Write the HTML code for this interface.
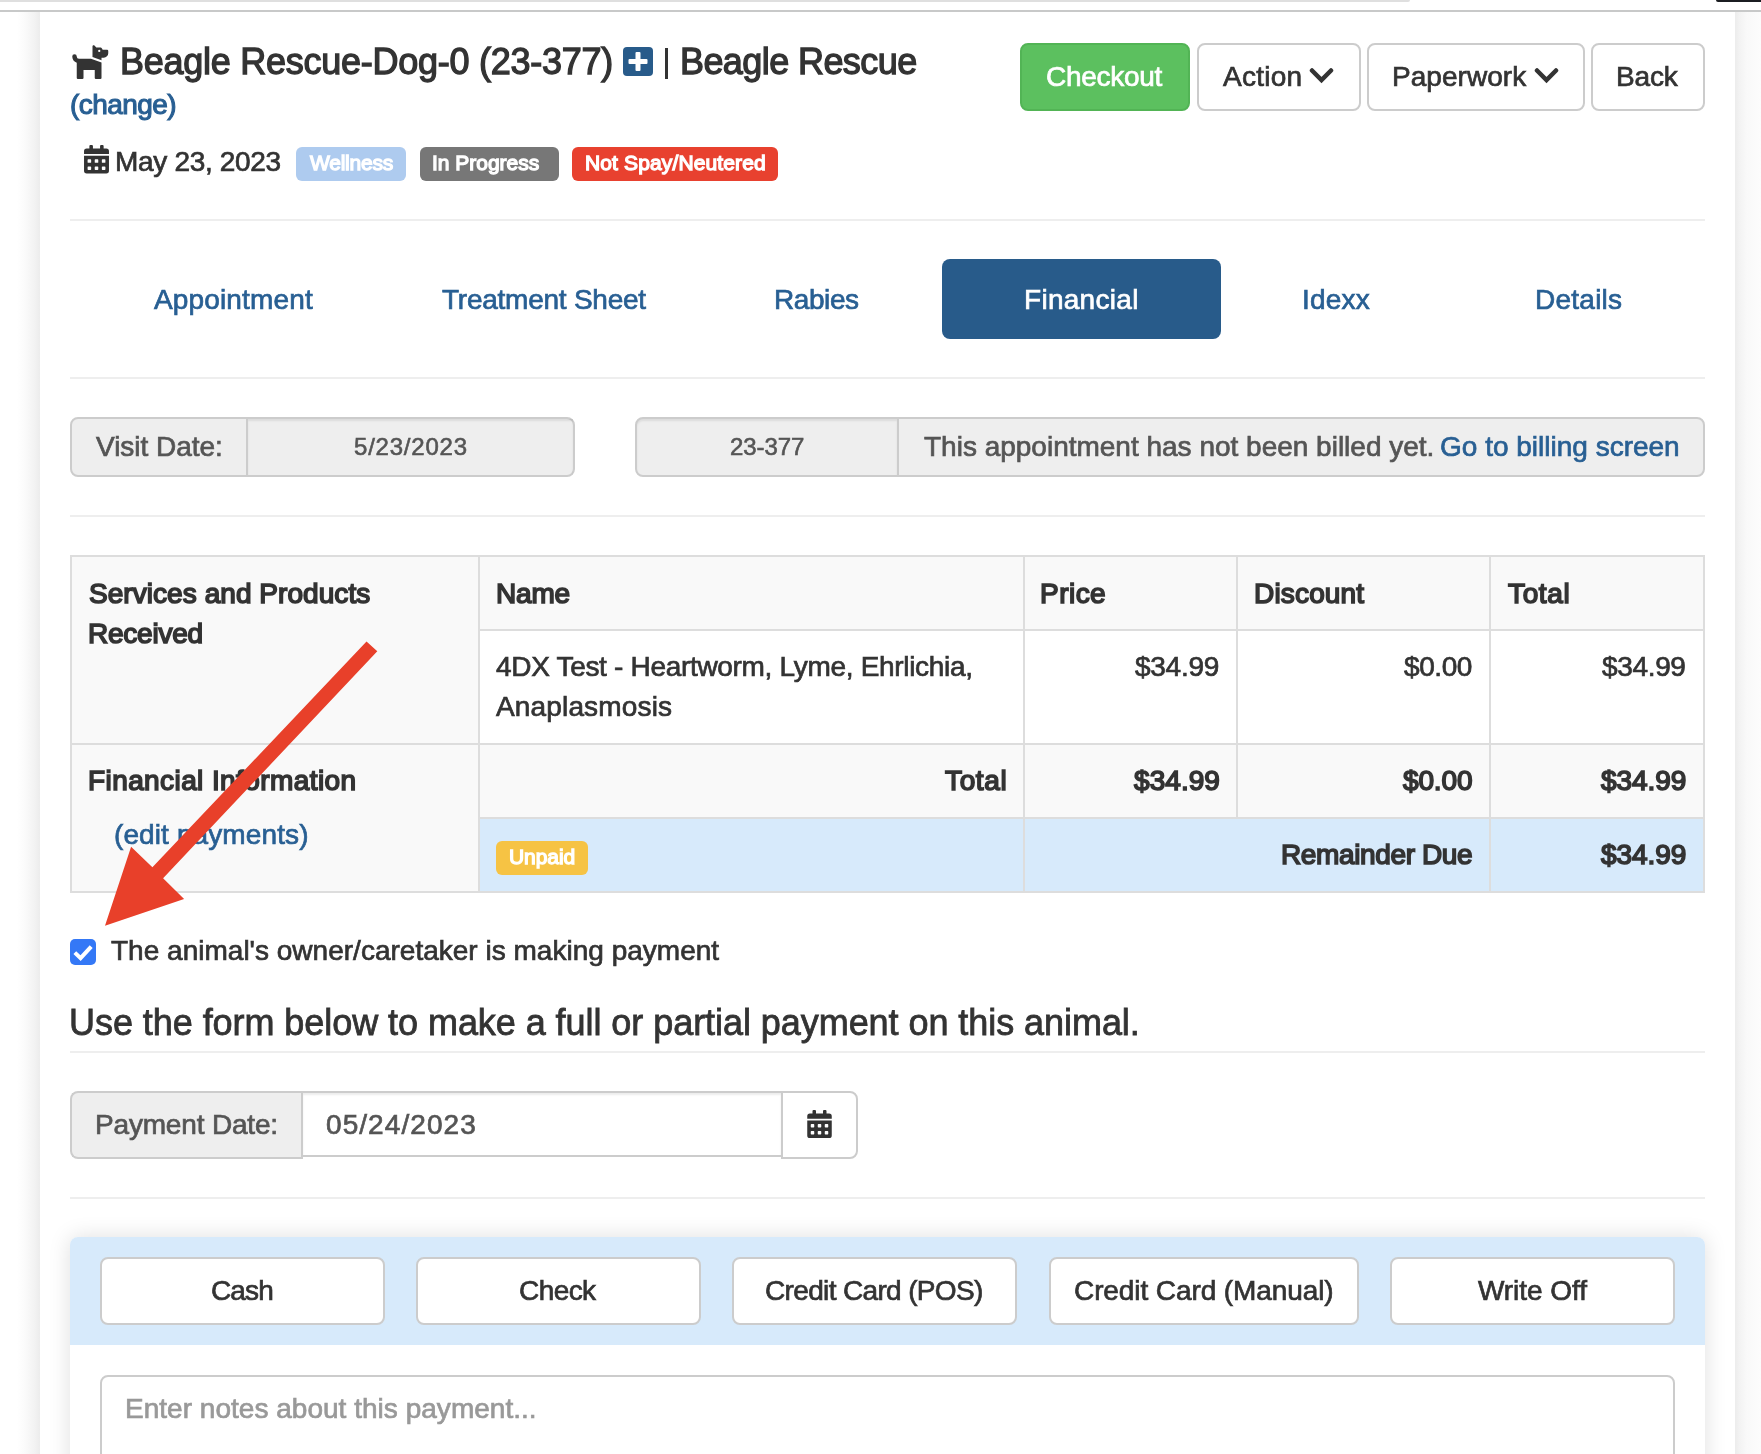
<!DOCTYPE html>
<html><head><meta charset="utf-8">
<style>
*{box-sizing:border-box;}
html,body{margin:0;padding:0;}
body{width:1761px;height:1454px;overflow:hidden;position:relative;background:#fff;font-family:"Liberation Sans",sans-serif;color:#333;}
.a{position:absolute;}
.t{position:absolute;white-space:nowrap;will-change:transform;}
.hr{position:absolute;left:70px;width:1635px;height:2px;background:#eee;}
.btn{position:absolute;height:68px;border:2px solid #ccc;border-radius:8px;background:#fff;}
.badge{position:absolute;top:147px;height:34px;border-radius:6px;}
</style></head><body>
<div class="a" style="left:0;top:0;width:1410px;height:2px;background:#dfdfdf;border-bottom-right-radius:3px;"></div>
<div class="a" style="left:1716px;top:0;width:45px;height:2px;background:#1b1d21;border-bottom-left-radius:3px;"></div>
<div class="a" style="left:0;top:10px;width:1761px;height:2px;background:#c8c9c9;"></div>
<div class="a" style="left:0;top:12px;width:40px;height:1442px;background:linear-gradient(to right,#fff 0px,#fff 17px,#fbfbfb 24px,#f3f3f3 34px,#ececec 40px);"></div>
<div class="a" style="left:1735px;top:12px;width:26px;height:1442px;background:linear-gradient(to right,#ececec 0px,#f3f3f3 5px,#f9f9f9 12px,#fcfcfc 26px);"></div>
<svg class="a" style="left:69.75px;top:42.8px;width:40.5px;height:36px" viewBox="0 0 576 512"><path fill="#333" d="M298.06,224,448,277.55V496a16,16,0,0,1-16,16H368a16,16,0,0,1-16-16V384H192V496a16,16,0,0,1-16,16H112a16,16,0,0,1-16-16V282.09C58.84,268.84,32,233.66,32,192a32,32,0,0,1,64,0,32.06,32.06,0,0,0,32,32ZM544,112v32a64,64,0,0,1-64,64H448v35.58L320,197.87V48c0-14.25,17.22-21.39,27.31-11.31L374.59,64h53.63c10.91,0,23.75,7.92,28.62,17.69L464,96h64A16,16,0,0,1,544,112Zm-112,0a16,16,0,1,0-16,16A16,16,0,0,0,432,112Z"/></svg>
<svg class="a" style="left:623px;top:47px;width:30px;height:29px" viewBox="0 0 30 29"><rect x="0" y="0" width="30" height="29" rx="4" fill="#285b8a"/><rect x="12.5" y="5" width="5" height="19" rx="1" fill="#fff"/><rect x="5.5" y="12" width="19" height="5" rx="1" fill="#fff"/></svg>
<div class="a" style="left:664.5px;top:48px;width:3.5px;height:30.5px;background:#333;"></div>
<svg class="a" style="left:84px;top:145px;width:25px;height:28.5px" viewBox="0 0 448 512"><path fill="#333" d="M0 112a48 48 0 0 1 48-48h352a48 48 0 0 1 48 48v48H0z M96 20a20 20 0 0 1 20-20h24a20 20 0 0 1 20 20v50H96z M288 20a20 20 0 0 1 20-20h24a20 20 0 0 1 20 20v50H288z"/><path fill="#333" fill-rule="evenodd" d="M0 192h448v272a48 48 0 0 1-48 48H48a48 48 0 0 1-48-48z M64 268a12 12 0 0 1 12-12h40a12 12 0 0 1 12 12v40a12 12 0 0 1-12 12h-40a12 12 0 0 1-12-12z M192 268a12 12 0 0 1 12-12h40a12 12 0 0 1 12 12v40a12 12 0 0 1-12 12h-40a12 12 0 0 1-12-12z M320 268a12 12 0 0 1 12-12h40a12 12 0 0 1 12 12v40a12 12 0 0 1-12 12h-40a12 12 0 0 1-12-12z M64 396a12 12 0 0 1 12-12h40a12 12 0 0 1 12 12v40a12 12 0 0 1-12 12h-40a12 12 0 0 1-12-12z M192 396a12 12 0 0 1 12-12h40a12 12 0 0 1 12 12v40a12 12 0 0 1-12 12h-40a12 12 0 0 1-12-12z M320 396a12 12 0 0 1 12-12h40a12 12 0 0 1 12 12v40a12 12 0 0 1-12 12h-40a12 12 0 0 1-12-12z"/></svg>
<div class="badge" style="left:296px;width:110px;background:#aecbef;"></div>
<div class="badge" style="left:420px;width:139px;background:#777;"></div>
<div class="badge" style="left:572px;width:206px;background:#e8412f;"></div>
<div class="btn" style="left:1020px;top:43px;width:170px;background:#5cc05f;border-color:#52b455;"></div>
<div class="btn" style="left:1197px;top:43px;width:164px;"></div>
<svg class="a" style="left:1309px;top:68px;width:25px;height:16px" viewBox="0 0 25 16"><path d="M3 2.5 L12.5 12 L22 2.5" fill="none" stroke="#333" stroke-width="4.5" stroke-linecap="round"/></svg>
<div class="btn" style="left:1367px;top:43px;width:218px;"></div>
<svg class="a" style="left:1533.5px;top:68px;width:25px;height:16px" viewBox="0 0 25 16"><path d="M3 2.5 L12.5 12 L22 2.5" fill="none" stroke="#333" stroke-width="4.5" stroke-linecap="round"/></svg>
<div class="btn" style="left:1591px;top:43px;width:114px;"></div>
<div class="hr" style="top:219px;"></div>
<div class="a" style="left:942px;top:259px;width:279px;height:80px;background:#285b8a;border-radius:8px;"></div>
<div class="hr" style="top:377px;"></div>
<div class="a" style="left:70px;top:417px;width:505px;height:60px;border:2px solid #ccc;border-radius:8px;background:#eee;"></div>
<div class="a" style="left:248px;top:419px;width:325px;height:56px;box-shadow:inset 0 2px 2px rgba(0,0,0,.075);"></div>
<div class="a" style="left:246px;top:419px;width:2px;height:56px;background:#ccc;"></div>
<div class="a" style="left:635px;top:417px;width:1070px;height:60px;border:2px solid #ccc;border-radius:8px;background:#eee;"></div>
<div class="a" style="left:637px;top:419px;width:260px;height:56px;border-radius:6px 0 0 6px;box-shadow:inset 0 2px 2px rgba(0,0,0,.075);"></div>
<div class="a" style="left:897px;top:419px;width:2px;height:56px;background:#ccc;"></div>
<div class="hr" style="top:515px;"></div>
<div class="a" style="left:70px;top:555px;width:1635px;height:338px;background:#ddd;"></div>
<div class="a" style="left:72px;top:557px;width:406px;height:186px;background:#f9f9f9;"></div>
<div class="a" style="left:72px;top:745px;width:406px;height:146px;background:#f9f9f9;"></div>
<div class="a" style="left:480px;top:557px;width:543px;height:72px;background:#f9f9f9;"></div>
<div class="a" style="left:1025px;top:557px;width:211px;height:72px;background:#f9f9f9;"></div>
<div class="a" style="left:1238px;top:557px;width:251px;height:72px;background:#f9f9f9;"></div>
<div class="a" style="left:1491px;top:557px;width:212px;height:72px;background:#f9f9f9;"></div>
<div class="a" style="left:480px;top:631px;width:543px;height:112px;background:#fff;"></div>
<div class="a" style="left:1025px;top:631px;width:211px;height:112px;background:#fff;"></div>
<div class="a" style="left:1238px;top:631px;width:251px;height:112px;background:#fff;"></div>
<div class="a" style="left:1491px;top:631px;width:212px;height:112px;background:#fff;"></div>
<div class="a" style="left:480px;top:745px;width:543px;height:72px;background:#f9f9f9;"></div>
<div class="a" style="left:1025px;top:745px;width:211px;height:72px;background:#f9f9f9;"></div>
<div class="a" style="left:1238px;top:745px;width:251px;height:72px;background:#f9f9f9;"></div>
<div class="a" style="left:1491px;top:745px;width:212px;height:72px;background:#f9f9f9;"></div>
<div class="a" style="left:480px;top:819px;width:543px;height:72px;background:#d7eafb;"></div>
<div class="a" style="left:1025px;top:819px;width:464px;height:72px;background:#d7eafb;"></div>
<div class="a" style="left:1491px;top:819px;width:212px;height:72px;background:#d7eafb;"></div>
<div class="badge" style="left:496px;top:841px;width:92px;background:#f6c344;"></div>
<svg class="a" style="left:70px;top:939px;width:26px;height:26px" viewBox="0 0 26 26"><rect x="0" y="0" width="26" height="26" rx="5" fill="#3478f6"/><path d="M4.8 13.6 L10.6 19.2 L21.2 7.6" fill="none" stroke="#fff" stroke-width="4" stroke-linecap="butt"/></svg>
<div class="hr" style="top:1051px;"></div>
<div class="a" style="left:70px;top:1091px;width:233px;height:68px;border:2px solid #ccc;border-right:none;border-radius:8px 0 0 8px;background:#eee;"></div>
<div class="a" style="left:781px;top:1091px;width:77px;height:68px;border:2px solid #ccc;border-radius:0 8px 8px 0;background:#fff;"></div>
<div class="a" style="left:301px;top:1091px;width:482px;height:66px;border:2px solid #ccc;background:#fff;box-shadow:inset 0 2px 2px rgba(0,0,0,.075);"></div>
<svg class="a" style="left:807px;top:1109.5px;width:25px;height:28px" viewBox="0 0 448 512"><path fill="#333" d="M0 112a48 48 0 0 1 48-48h352a48 48 0 0 1 48 48v48H0z M96 20a20 20 0 0 1 20-20h24a20 20 0 0 1 20 20v50H96z M288 20a20 20 0 0 1 20-20h24a20 20 0 0 1 20 20v50H288z"/><path fill="#333" fill-rule="evenodd" d="M0 192h448v272a48 48 0 0 1-48 48H48a48 48 0 0 1-48-48z M64 268a12 12 0 0 1 12-12h40a12 12 0 0 1 12 12v40a12 12 0 0 1-12 12h-40a12 12 0 0 1-12-12z M192 268a12 12 0 0 1 12-12h40a12 12 0 0 1 12 12v40a12 12 0 0 1-12 12h-40a12 12 0 0 1-12-12z M320 268a12 12 0 0 1 12-12h40a12 12 0 0 1 12 12v40a12 12 0 0 1-12 12h-40a12 12 0 0 1-12-12z M64 396a12 12 0 0 1 12-12h40a12 12 0 0 1 12 12v40a12 12 0 0 1-12 12h-40a12 12 0 0 1-12-12z M192 396a12 12 0 0 1 12-12h40a12 12 0 0 1 12 12v40a12 12 0 0 1-12 12h-40a12 12 0 0 1-12-12z M320 396a12 12 0 0 1 12-12h40a12 12 0 0 1 12 12v40a12 12 0 0 1-12 12h-40a12 12 0 0 1-12-12z"/></svg>
<div class="hr" style="top:1197px;"></div>
<div class="a" style="left:70px;top:1237px;width:1635px;height:240px;border-radius:8px;background:#fff;box-shadow:0 0 22px rgba(0,0,0,0.13);"></div>
<div class="a" style="left:70px;top:1237px;width:1635px;height:108px;border-radius:8px 8px 0 0;background:#d7eafb;"></div>
<div class="btn" style="left:100px;top:1257px;width:285px;"></div>
<div class="btn" style="left:416px;top:1257px;width:285px;"></div>
<div class="btn" style="left:732px;top:1257px;width:285px;"></div>
<div class="btn" style="left:1049px;top:1257px;width:310px;"></div>
<div class="btn" style="left:1390px;top:1257px;width:285px;"></div>
<div class="a" style="left:100px;top:1375px;width:1575px;height:120px;border:2px solid #ccc;border-radius:8px;background:#fff;"></div>
<div class="t" style="left:120.1px;top:43.8px;font-size:36px;line-height:36px;color:#333;letter-spacing:-0.263px;-webkit-text-stroke:1.3px #333;">Beagle Rescue-Dog-0 (23-377)</div>
<div class="t" style="left:680.0px;top:43.8px;font-size:36px;line-height:36px;color:#333;letter-spacing:-0.583px;-webkit-text-stroke:1.3px #333;">Beagle Rescue</div>
<div class="t" style="left:70.0px;top:91.0px;font-size:28px;line-height:28px;color:#285f93;letter-spacing:-0.571px;-webkit-text-stroke:1.1px #285f93;">(change)</div>
<div class="t" style="left:114.7px;top:147.8px;font-size:28px;line-height:28px;color:#333;letter-spacing:-0.318px;-webkit-text-stroke:0.7px #333;">May 23, 2023</div>
<div class="t" style="left:309.6px;top:151.8px;font-size:21px;line-height:21px;color:#fff;letter-spacing:-0.229px;-webkit-text-stroke:1.3px #fff;">Wellness</div>
<div class="t" style="left:432.3px;top:151.8px;font-size:21px;line-height:21px;color:#fff;letter-spacing:-0.02px;-webkit-text-stroke:1.3px #fff;">In Progress</div>
<div class="t" style="left:584.9px;top:151.8px;font-size:21px;line-height:21px;color:#fff;letter-spacing:0.131px;-webkit-text-stroke:1.3px #fff;">Not Spay/Neutered</div>
<div class="t" style="left:1046.0px;top:63.0px;font-size:28px;line-height:28px;color:#fff;letter-spacing:-0.286px;-webkit-text-stroke:0.7px #fff;">Checkout</div>
<div class="t" style="left:1223.4px;top:63.0px;font-size:28px;line-height:28px;color:#333;letter-spacing:0.24px;-webkit-text-stroke:0.7px #333;">Action</div>
<div class="t" style="left:1392.0px;top:63.0px;font-size:28px;line-height:28px;color:#333;letter-spacing:0.05px;-webkit-text-stroke:0.7px #333;">Paperwork</div>
<div class="t" style="left:1616.0px;top:63.0px;font-size:28px;line-height:28px;color:#333;letter-spacing:-0.167px;-webkit-text-stroke:0.7px #333;">Back</div>
<div class="t" style="left:153.5px;top:285.9px;font-size:28px;line-height:28px;color:#285f93;letter-spacing:0.15px;-webkit-text-stroke:0.7px #285f93;">Appointment</div>
<div class="t" style="left:442.4px;top:285.9px;font-size:28px;line-height:28px;color:#285f93;letter-spacing:-0.243px;-webkit-text-stroke:0.7px #285f93;">Treatment Sheet</div>
<div class="t" style="left:773.7px;top:285.9px;font-size:28px;line-height:28px;color:#285f93;letter-spacing:-0.42px;-webkit-text-stroke:0.7px #285f93;">Rabies</div>
<div class="t" style="left:1023.9px;top:285.9px;font-size:28px;line-height:28px;color:#fff;letter-spacing:0.287px;-webkit-text-stroke:0.7px #fff;">Financial</div>
<div class="t" style="left:1301.9px;top:285.9px;font-size:28px;line-height:28px;color:#285f93;letter-spacing:0.225px;-webkit-text-stroke:0.7px #285f93;">Idexx</div>
<div class="t" style="left:1534.5px;top:285.9px;font-size:28px;line-height:28px;color:#285f93;letter-spacing:0.25px;-webkit-text-stroke:0.7px #285f93;">Details</div>
<div class="t" style="left:96.4px;top:433.0px;font-size:28px;line-height:28px;color:#555;letter-spacing:-0.03px;-webkit-text-stroke:0.7px #555;">Visit Date:</div>
<div class="t" style="left:354.1px;top:434.7px;font-size:24px;line-height:24px;color:#555;letter-spacing:0.787px;-webkit-text-stroke:0.6px #555;">5/23/2023</div>
<div class="t" style="left:729.8px;top:435.3px;font-size:24px;line-height:24px;color:#555;letter-spacing:-0.06px;-webkit-text-stroke:0.6px #555;">23-377</div>
<div class="t" style="left:924.0px;top:433.0px;font-size:28px;line-height:28px;color:#555;letter-spacing:-0.005px;-webkit-text-stroke:0.7px #555;">This appointment has not been billed yet.</div>
<div class="t" style="left:1440.0px;top:433.0px;font-size:28px;line-height:28px;color:#285f93;letter-spacing:0.0px;-webkit-text-stroke:0.7px #285f93;">Go to billing screen</div>
<div class="t" style="left:88.7px;top:579.5px;font-size:28px;line-height:28px;color:#333;letter-spacing:0.055px;-webkit-text-stroke:1.6px #333;">Services and Products</div>
<div class="t" style="left:87.7px;top:619.5px;font-size:28px;line-height:28px;color:#333;letter-spacing:-0.229px;-webkit-text-stroke:1.6px #333;">Received</div>
<div class="t" style="left:495.8px;top:579.5px;font-size:28px;line-height:28px;color:#333;letter-spacing:-0.2px;-webkit-text-stroke:1.6px #333;">Name</div>
<div class="t" style="left:1040.0px;top:579.5px;font-size:28px;line-height:28px;color:#333;letter-spacing:0.475px;-webkit-text-stroke:1.6px #333;">Price</div>
<div class="t" style="left:1254.0px;top:579.5px;font-size:28px;line-height:28px;color:#333;letter-spacing:0.171px;-webkit-text-stroke:1.6px #333;">Discount</div>
<div class="t" style="left:1507.8px;top:579.5px;font-size:28px;line-height:28px;color:#333;letter-spacing:0.625px;-webkit-text-stroke:1.6px #333;">Total</div>
<div class="t" style="left:496.2px;top:653.3px;font-size:28px;line-height:28px;color:#333;letter-spacing:-0.314px;-webkit-text-stroke:0.7px #333;">4DX Test - Heartworm, Lyme, Ehrlichia,</div>
<div class="t" style="left:496.2px;top:693.3px;font-size:28px;line-height:28px;color:#333;letter-spacing:0.155px;-webkit-text-stroke:0.7px #333;">Anaplasmosis</div>
<div class="t" style="left:1135.3px;top:653.3px;font-size:28px;line-height:28px;color:#333;letter-spacing:-0.26px;-webkit-text-stroke:0.7px #333;">$34.99</div>
<div class="t" style="left:1404.0px;top:653.3px;font-size:28px;line-height:28px;color:#333;letter-spacing:-0.425px;-webkit-text-stroke:0.7px #333;">$0.00</div>
<div class="t" style="left:1602.3px;top:653.3px;font-size:28px;line-height:28px;color:#333;letter-spacing:-0.34px;-webkit-text-stroke:0.7px #333;">$34.99</div>
<div class="t" style="left:87.9px;top:767.0px;font-size:28px;line-height:28px;color:#333;letter-spacing:0.41px;-webkit-text-stroke:1.6px #333;">Financial Information</div>
<div class="t" style="left:113.9px;top:820.6px;font-size:28px;line-height:28px;color:#285f93;letter-spacing:0.107px;-webkit-text-stroke:0.7px #285f93;">(edit payments)</div>
<div class="t" style="left:944.5px;top:767.0px;font-size:28px;line-height:28px;color:#333;letter-spacing:0.625px;-webkit-text-stroke:1.6px #333;">Total</div>
<div class="t" style="left:1133.7px;top:767.0px;font-size:28px;line-height:28px;color:#333;letter-spacing:0.06px;-webkit-text-stroke:1.6px #333;">$34.99</div>
<div class="t" style="left:1402.9px;top:767.0px;font-size:28px;line-height:28px;color:#333;letter-spacing:-0.15px;-webkit-text-stroke:1.6px #333;">$0.00</div>
<div class="t" style="left:1600.8px;top:767.0px;font-size:28px;line-height:28px;color:#333;letter-spacing:-0.04px;-webkit-text-stroke:1.6px #333;">$34.99</div>
<div class="t" style="left:508.5px;top:846.1px;font-size:21px;line-height:21px;color:#fff;letter-spacing:-0.08px;-webkit-text-stroke:1.3px #fff;">Unpaid</div>
<div class="t" style="left:1280.8px;top:841.0px;font-size:28px;line-height:28px;color:#333;letter-spacing:-0.375px;-webkit-text-stroke:1.6px #333;">Remainder Due</div>
<div class="t" style="left:1600.8px;top:841.0px;font-size:28px;line-height:28px;color:#333;letter-spacing:-0.04px;-webkit-text-stroke:1.6px #333;">$34.99</div>
<div class="t" style="left:110.5px;top:937.0px;font-size:28px;line-height:28px;color:#333;letter-spacing:0.011px;-webkit-text-stroke:0.7px #333;">The animal&#x27;s owner/caretaker is making payment</div>
<div class="t" style="left:69.4px;top:1005.0px;font-size:36px;line-height:36px;color:#333;letter-spacing:-0.055px;-webkit-text-stroke:0.8px #333;">Use the form below to make a full or partial payment on this animal.</div>
<div class="t" style="left:95.1px;top:1111.2px;font-size:28px;line-height:28px;color:#555;letter-spacing:-0.175px;-webkit-text-stroke:0.7px #555;">Payment Date:</div>
<div class="t" style="left:326.3px;top:1111.2px;font-size:28px;line-height:28px;color:#555;letter-spacing:1.067px;-webkit-text-stroke:0.7px #555;">05/24/2023</div>
<div class="t" style="left:210.9px;top:1277.0px;font-size:28px;line-height:28px;color:#333;letter-spacing:-0.867px;-webkit-text-stroke:0.7px #333;">Cash</div>
<div class="t" style="left:519.0px;top:1277.0px;font-size:28px;line-height:28px;color:#333;letter-spacing:-0.575px;-webkit-text-stroke:0.7px #333;">Check</div>
<div class="t" style="left:765.3px;top:1277.0px;font-size:28px;line-height:28px;color:#333;letter-spacing:-0.65px;-webkit-text-stroke:0.7px #333;">Credit Card (POS)</div>
<div class="t" style="left:1073.5px;top:1277.0px;font-size:28px;line-height:28px;color:#333;letter-spacing:-0.095px;-webkit-text-stroke:0.7px #333;">Credit Card (Manual)</div>
<div class="t" style="left:1477.9px;top:1277.0px;font-size:28px;line-height:28px;color:#333;letter-spacing:-0.062px;-webkit-text-stroke:0.7px #333;">Write Off</div>
<div class="t" style="left:125.0px;top:1394.8px;font-size:28px;line-height:28px;color:#999;letter-spacing:0.022px;-webkit-text-stroke:0.7px #999;">Enter notes about this payment...</div>
<svg class="a" style="left:0;top:0;width:1761px;height:1454px" viewBox="0 0 1761 1454"><polygon points="366.5,641.5 377.3,651.3 163.1,878.3 184.1,899 105,925.8 131.1,846.7 152.4,867.3" fill="#e8402a"/></svg>
</body></html>
